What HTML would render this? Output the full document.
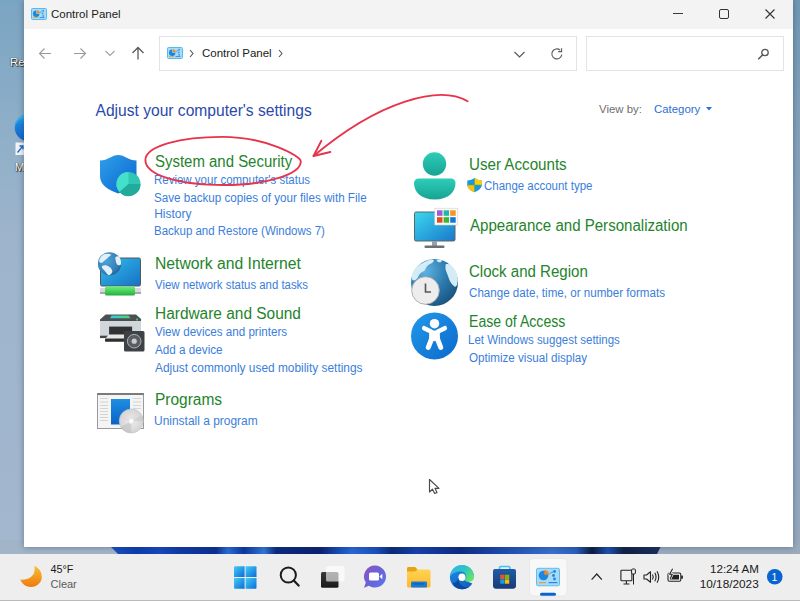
<!DOCTYPE html>
<html><head><meta charset="utf-8">
<style>
*{margin:0;padding:0;box-sizing:border-box}
html,body{width:800px;height:601px;overflow:hidden}
body{position:relative;font-family:"Liberation Sans",sans-serif;background:linear-gradient(180deg,rgba(30,40,60,0) 0%,rgba(30,40,60,0) 100%),linear-gradient(90deg,rgba(0,0,0,0) 0%,rgba(0,0,0,0) 60%,rgba(30,45,70,.1) 100%),linear-gradient(180deg,#7aa5c2 0%,#8fafc8 22%,#9db4cc 40%,#a4b8cf 100%)}
.a{position:absolute;white-space:nowrap;line-height:1}
#win{position:absolute;left:24px;top:0;width:769px;height:547px;background:#fff;box-shadow:0 0 6px rgba(40,50,70,.45)}
#title{position:absolute;left:0;top:0;width:769px;height:29px;background:#f3f3f3}
.box{position:absolute;border:1px solid #e3e3e3;background:#fff}
.t{color:#23842b;font-size:16px;transform-origin:0 0}
.l{color:#3a7edb;font-size:12px;transform-origin:0 0}
#tb{position:absolute;left:0;top:554px;width:800px;height:47px;background:#eeeeee;border-bottom:1px solid #bababa}
</style></head><body>
<!-- desktop bits -->
<svg class="a" style="left:0;top:540px" width="800" height="14" viewBox="0 540 800 14">
  <defs><linearGradient id="gStrip" x1="0" y1="0" x2="800" y2="0" gradientUnits="userSpaceOnUse">
    <stop offset="0.13" stop-color="#1a50c0"/>
    <stop offset="0.14" stop-color="#1a50c0"/><stop offset="0.17" stop-color="#0c3cb0"/>
    <stop offset="0.2" stop-color="#1648c0"/><stop offset="0.225" stop-color="#0e3aa8"/>
    <stop offset="0.27" stop-color="#0a2e94"/><stop offset="0.285" stop-color="#2a6ed8"/>
    <stop offset="0.305" stop-color="#0a36a0"/><stop offset="0.33" stop-color="#3478dc"/>
    <stop offset="0.345" stop-color="#0a2a80"/><stop offset="0.4" stop-color="#0a2070"/>
    <stop offset="0.425" stop-color="#1850c0"/><stop offset="0.44" stop-color="#2a68d8"/>
    <stop offset="0.47" stop-color="#1a50c0"/><stop offset="0.49" stop-color="#0a2a78"/>
    <stop offset="0.52" stop-color="#1440b0"/><stop offset="0.575" stop-color="#0c2c84"/>
    <stop offset="0.625" stop-color="#1a4ab0"/><stop offset="0.69" stop-color="#3a70d0"/>
    <stop offset="0.72" stop-color="#2a60c0"/><stop offset="0.74" stop-color="#0a1a40"/>
    <stop offset="0.76" stop-color="#2050b0"/><stop offset="0.78" stop-color="#102040"/>
    <stop offset="0.83" stop-color="#1a3060"/>
  </linearGradient></defs>
  <rect x="0" y="540" width="800" height="14" fill="#9aaabd"/><rect x="0" y="540" width="120" height="14" fill="#a2b4c8"/><path d="M104,540 L664,540 L660.5,547 L657,554 L118,554 L111,547 Z" fill="url(#gStrip)"/>
</svg>

<!-- desktop icons -->
<div class="a" style="left:10px;top:56.2px;font-size:11.6px;color:#fff;text-shadow:0 0 1px #000,1px 1px 1px #222">Re</div>
<svg class="a" style="left:0;top:100px" width="30" height="60" viewBox="0 100 30 60">
  <defs><linearGradient id="gDesk" x1="0" y1="0" x2="0" y2="1"><stop offset="0" stop-color="#36a8ec"/><stop offset="0.4" stop-color="#1a82dc"/><stop offset="1" stop-color="#1064c8"/></linearGradient></defs>
  <circle cx="28" cy="127.5" r="13.3" fill="url(#gDesk)"/>
  <path d="M15,128 C16,121 21,117.5 27,117.5 L27,114.5 C20,114.5 15,120 15,128Z" fill="#3ab4f0" opacity="0.8"/>
  <rect x="15.5" y="142.5" width="10" height="12.5" fill="#f4f4f4"/>
  <path d="M17.5,152.5 L22.5,146.5 M19.5,146 H23 V149.5" stroke="#1a6ad8" stroke-width="1.3" fill="none"/>
</svg>
<div class="a" style="left:14.7px;top:161px;font-size:11.6px;color:#fff;text-shadow:0 0 1px #000,1px 1px 1px #222">M</div>
<div id="win">
  <div id="title">
    <svg class="a" style="left:7px;top:8px" width="16" height="12" viewBox="0 0 16 12">
      <rect x="0.5" y="0.5" width="15" height="11" rx="1" fill="#a6dcf8" stroke="#5ab8f0"/>
      <path d="M5.2 5.8 L5.2 2.6 A3.2 3.2 0 1 0 8.4 5.8 Z" fill="#1a86dc"/>
      <path d="M5.7 5.3 L5.7 2.3 A3 3 0 0 1 8.7 5.3 Z" fill="#f08a24"/>
      <path d="M8.8 4.8 Q10 3.5 11.5 3.2" stroke="#3a90e0" stroke-width="0.7" fill="none"/>
      <circle cx="12.2" cy="2.8" r="1" fill="#4a9ae4"/><circle cx="11.6" cy="5.6" r="1" fill="#4a9ae4"/><circle cx="12.2" cy="8" r="0.9" fill="#4a9ae4"/>
      <rect x="2" y="9" width="5" height="0.9" fill="#f0a030"/><rect x="8.5" y="9" width="5" height="0.9" fill="#3a8ae0"/>
    </svg>
    <div class="a" style="left:27px;top:9px;font-size:11.5px;color:#1a1a1a">Control Panel</div>
    <div class="a" style="left:649px;top:13px;width:10px;height:1px;background:#3a3a3a"></div>
    <div class="a" style="left:695px;top:9px;width:10px;height:10px;border:1px solid #333;border-radius:2px"></div>
    <svg class="a" style="left:741px;top:9px" width="10" height="10" viewBox="0 0 10 10"><path d="M0.5 0.5 L9.5 9.5 M9.5 0.5 L0.5 9.5" stroke="#333" stroke-width="1.1"/></svg>
  </div>
  <!-- nav -->
  <svg class="a" style="left:14px;top:47px" width="14" height="13" viewBox="0 0 14 13"><path d="M13 6.5 H1.5 M6.5 1.5 L1.5 6.5 L6.5 11.5" stroke="#9a9a9a" stroke-width="1.1" fill="none"/></svg>
  <svg class="a" style="left:49px;top:47px" width="14" height="13" viewBox="0 0 14 13"><path d="M1 6.5 H12.5 M7.5 1.5 L12.5 6.5 L7.5 11.5" stroke="#9a9a9a" stroke-width="1.1" fill="none"/></svg>
  <svg class="a" style="left:81px;top:50px" width="10" height="7" viewBox="0 0 10 7"><path d="M0.5 1 L5 5.5 L9.5 1" stroke="#a0a0a0" stroke-width="1.1" fill="none"/></svg>
  <svg class="a" style="left:107px;top:46px" width="14" height="14" viewBox="0 0 14 14"><path d="M7 13.5 V1.5 M1.5 7 L7 1.5 L12.5 7" stroke="#5a5a5a" stroke-width="1.3" fill="none"/></svg>
  <!-- address -->
  <div class="box" style="left:135px;top:36px;width:418px;height:35px"></div>
  <svg class="a" style="left:143px;top:47px" width="16" height="12" viewBox="0 0 16 12">
      <rect x="0.5" y="0.5" width="15" height="11" rx="1" fill="#a6dcf8" stroke="#5ab8f0"/>
      <path d="M5.2 5.8 L5.2 2.6 A3.2 3.2 0 1 0 8.4 5.8 Z" fill="#1a86dc"/>
      <path d="M5.7 5.3 L5.7 2.3 A3 3 0 0 1 8.7 5.3 Z" fill="#f08a24"/>
      <path d="M8.8 4.8 Q10 3.5 11.5 3.2" stroke="#3a90e0" stroke-width="0.7" fill="none"/>
      <circle cx="12.2" cy="2.8" r="1" fill="#4a9ae4"/><circle cx="11.6" cy="5.6" r="1" fill="#4a9ae4"/><circle cx="12.2" cy="8" r="0.9" fill="#4a9ae4"/>
      <rect x="2" y="9" width="5" height="0.9" fill="#f0a030"/><rect x="8.5" y="9" width="5" height="0.9" fill="#3a8ae0"/>
  </svg>
  <svg class="a" style="left:165px;top:49px" width="5" height="9" viewBox="0 0 5 9"><path d="M1 1 L4 4.5 L1 8" stroke="#555" stroke-width="1.1" fill="none"/></svg>
  <div class="a" style="left:178px;top:48px;font-size:11.5px;color:#1a1a1a">Control Panel</div>
  <svg class="a" style="left:254px;top:49px" width="5" height="9" viewBox="0 0 5 9"><path d="M1 1 L4 4.5 L1 8" stroke="#555" stroke-width="1.1" fill="none"/></svg>
  <svg class="a" style="left:490px;top:51px" width="11" height="7" viewBox="0 0 11 7"><path d="M0.5 1 L5.5 6 L10.5 1" stroke="#555" stroke-width="1.1" fill="none"/></svg>
  <svg class="a" style="left:526px;top:47px" width="14" height="14" viewBox="0 0 14 14"><path d="M11.8 7.5 A5 5 0 1 1 10.2 3.2" stroke="#5a5a5a" stroke-width="1.1" fill="none"/><path d="M11.6 1.2 V4.6 H8.2" stroke="#5a5a5a" stroke-width="1.1" fill="none"/></svg>
  <!-- search -->
  <div class="box" style="left:562px;top:36px;width:198px;height:35px"></div>
  <svg class="a" style="left:733px;top:48px" width="12" height="12" viewBox="0 0 12 12"><circle cx="8" cy="4.5" r="3.2" stroke="#555" stroke-width="1.3" fill="none"/><path d="M5.7 6.8 L1.2 11.2" stroke="#555" stroke-width="1.5"/></svg>
  <!-- content -->
  <div class="a" style="left:71.5px;top:103px;font-size:15.6px;color:#2a4aab">Adjust your computer's settings</div>
  <div class="a" style="left:575px;top:104.2px;font-size:11.4px;color:#6e6e6e">View by:</div>
  <div class="a" style="left:630px;top:104.2px;font-size:11.4px;color:#2a6fd6">Category</div>
  <svg class="a" style="left:681.5px;top:107px" width="6" height="4" viewBox="0 0 6 4"><path d="M0 0 H6 L3 3.5Z" fill="#2a6fd6"/></svg>
  <div class="a t" style="left:131.17px;top:153.96px;transform:scaleX(0.9349)">System and Security</div>
  <div class="a l" style="left:130.24px;top:173.64px;transform:scaleX(0.9574)">Review your computer's status</div>
  <div class="a l" style="left:130.23px;top:191.54px;transform:scaleX(0.9688)">Save backup copies of your files with File</div>
  <div class="a l" style="left:130.20px;top:207.54px;transform:scaleX(1.0000)">History</div>
  <div class="a l" style="left:130.24px;top:224.84px;transform:scaleX(0.9559)">Backup and Restore (Windows 7)</div>
  <div class="a t" style="left:130.72px;top:255.96px;transform:scaleX(0.9824)">Network and Internet</div>
  <div class="a l" style="left:131.20px;top:278.64px;transform:scaleX(0.9491)">View network status and tasks</div>
  <div class="a t" style="left:130.73px;top:306.46px;transform:scaleX(0.9651)">Hardware and Sound</div>
  <div class="a l" style="left:131.20px;top:326.04px;transform:scaleX(0.9676)">View devices and printers</div>
  <div class="a l" style="left:131.20px;top:344.44px;transform:scaleX(0.9739)">Add a device</div>
  <div class="a l" style="left:131.20px;top:361.84px;transform:scaleX(0.9909)">Adjust commonly used mobility settings</div>
  <div class="a t" style="left:130.73px;top:392.06px;transform:scaleX(0.9676)">Programs</div>
  <div class="a l" style="left:130.20px;top:414.84px;transform:scaleX(0.9961)">Uninstall a program</div>
  <div class="a t" style="left:444.55px;top:157.46px;transform:scaleX(0.9471)">User Accounts</div>
  <div class="a l" style="left:460.00px;top:179.84px;transform:scaleX(0.9558)">Change account type</div>
  <div class="a t" style="left:445.50px;top:218.46px;transform:scaleX(0.9411)">Appearance and Personalization</div>
  <div class="a t" style="left:444.56px;top:264.06px;transform:scaleX(0.9408)">Clock and Region</div>
  <div class="a l" style="left:444.50px;top:287.24px;transform:scaleX(0.9665)">Change date, time, or number formats</div>
  <div class="a t" style="left:444.62px;top:314.26px;transform:scaleX(0.8806)">Ease of Access</div>
  <div class="a l" style="left:444.04px;top:334.04px;transform:scaleX(0.9563)">Let Windows suggest settings</div>
  <div class="a l" style="left:444.50px;top:352.44px;transform:scaleX(0.9680)">Optimize visual display</div>
</div>

<!-- content icons -->
<svg class="a" style="left:0;top:0" width="800" height="547" viewBox="0 0 800 547">
  <defs>
    <linearGradient id="gShield" x1="0" y1="0" x2="1" y2="1"><stop offset="0" stop-color="#2e9fea"/><stop offset="1" stop-color="#0a66d0"/></linearGradient>
    <linearGradient id="gMon" x1="0" y1="0" x2="1" y2="1"><stop offset="0" stop-color="#33c0ea"/><stop offset="1" stop-color="#1670c6"/></linearGradient>
    <linearGradient id="gMon2" x1="0" y1="0" x2="1" y2="1"><stop offset="0" stop-color="#3ad8ee"/><stop offset="1" stop-color="#1a78cc"/></linearGradient>
    <linearGradient id="gGreen" x1="0" y1="0" x2="0" y2="1"><stop offset="0" stop-color="#6ef07a"/><stop offset="1" stop-color="#22b040"/></linearGradient>
    <radialGradient id="gGlobe" cx="0.35" cy="0.35" r="0.75"><stop offset="0" stop-color="#4ea4d8"/><stop offset="0.7" stop-color="#3580b8"/><stop offset="1" stop-color="#24608e"/></radialGradient>
    <radialGradient id="gGlobe2" cx="0.3" cy="0.25" r="0.9"><stop offset="0" stop-color="#62b2e2"/><stop offset="0.5" stop-color="#2c7cb0"/><stop offset="1" stop-color="#174c74"/></radialGradient>
    <linearGradient id="gTeal" x1="0" y1="0" x2="0" y2="1"><stop offset="0" stop-color="#2ecdb8"/><stop offset="1" stop-color="#17a394"/></linearGradient>
    <linearGradient id="gEase" x1="0" y1="0" x2="1" y2="1"><stop offset="0" stop-color="#229aea"/><stop offset="1" stop-color="#0b68cc"/></linearGradient>
    <radialGradient id="gCD" cx="0.5" cy="0.5" r="0.5"><stop offset="0" stop-color="#f6f6f6"/><stop offset="0.3" stop-color="#e6e6e6"/><stop offset="1" stop-color="#d4d4d4"/></radialGradient>
    <linearGradient id="gBlueDoc" x1="0" y1="0" x2="0" y2="1"><stop offset="0" stop-color="#1e8ee0"/><stop offset="1" stop-color="#0a62c8"/></linearGradient>
  </defs>
  <!-- System and Security shield -->
  <path d="M100,160.5 C108,160.5 112,155 118.2,155 C124.5,155 128.5,160.5 136.5,160.5 L136.5,176 C136.5,185 128,190 118.2,193.5 C108,190 100,185 100,176 Z" fill="url(#gShield)"/>
  <circle cx="128.5" cy="184" r="12" fill="#2fc6b2"/>
  <path d="M128.5,184 L128.5,172 A12,12 0 0 0 119.5,192 Z" fill="#44e0cc"/>
  <path d="M128.5,184 L119.5,192 A12,12 0 0 0 140.5,184 Z" fill="#22ab9a"/>
  <!-- Network -->
  <rect x="100.5" y="258" width="40" height="28" rx="1.5" fill="url(#gMon)" stroke="#505860" stroke-width="1"/>
  <rect x="100" y="288" width="41" height="6" rx="1" fill="#d8d8d8"/>
  <rect x="100" y="292" width="41" height="2" fill="#a8a8a8"/>
  <rect x="105" y="286.5" width="30" height="9" rx="1.5" fill="url(#gGreen)"/>
  <circle cx="109.5" cy="263.8" r="11.65" fill="url(#gGlobe)"/>
  <path d="M99,261.5 C99.5,258 101.5,255.5 104,254.3 C106.5,253.5 109.5,253.6 111.5,254.8 C110,256 109,256.5 107.5,258 C106,259.5 105,260 103.5,261.5 C102.5,263 100.5,263.5 99,261.5Z M101.8,266.2 C104,264.8 107,265 109.5,267 C111,268 112.2,269.5 112.3,271.5 C112,273.5 110.5,274.8 108.5,275.2 C106.5,273.5 105.5,271.5 104,270 C102.8,269 101.8,267.8 101.8,266.2Z M115.2,257.5 C116.5,256.2 118,255.8 119.2,256.8 C120.5,258.5 121.2,261 121,264 C120.5,265.5 118.5,265.8 117,264.5 C116,262.5 115.5,260 115.2,257.5Z" fill="#e2f1f9"/>
  <!-- Printer / Hardware -->
  <defs><linearGradient id="gSlot" x1="0" y1="0" x2="1" y2="0"><stop offset="0" stop-color="#30cce4"/><stop offset="1" stop-color="#52d46a"/></linearGradient></defs>
  <path d="M105.6,314.4 L136,314.4 L141,319 L141,321.2 L100,321.2 L100,319.5 Z" fill="#4c5054"/>
  <path d="M111.6,315.5 L128.5,315.5 L130.5,318.2 L110,318.2 Z" fill="url(#gSlot)"/>
  <rect x="136" y="318.5" width="2" height="2" fill="#3cc850"/>
  <rect x="100" y="321.2" width="41" height="14.8" fill="#d2d6da"/>
  <rect x="100" y="335.7" width="41" height="2.4" fill="#44484c"/>
  <rect x="109.1" y="326.6" width="23" height="8" fill="#303234"/>
  <path d="M108.5,334.8 L126,334.8 L126,338 L106,338 Z" fill="#e6e6e6"/>
  <rect x="105" y="338.4" width="21" height="3.4" rx="0.8" fill="#2c2e30"/>
  <rect x="124" y="331" width="20.5" height="20.5" rx="1.5" fill="#3e4246"/>
  <circle cx="134.2" cy="341.2" r="6.8" fill="#5a5e62" stroke="#b8bcc0" stroke-width="0.9"/>
  <circle cx="134.2" cy="341.2" r="2.6" fill="#c8ccd0"/>
  <!-- Programs -->
  <rect x="97.5" y="393.5" width="46" height="35" fill="#f4f4f4" stroke="#9a9a9a" stroke-width="1"/>
  <rect x="97" y="393" width="47" height="2" rx="1" fill="#7a7a7a"/>
  <g fill="#d4d4d4"><rect x="100" y="398" width="8" height="1"/><rect x="100" y="401.5" width="8" height="1"/><rect x="100" y="405" width="8" height="1"/><rect x="100" y="408" width="8" height="1"/><rect x="100" y="411" width="8" height="1"/><rect x="100" y="414" width="8" height="1"/><rect x="100" y="417" width="8" height="1"/><rect x="100" y="420" width="8" height="1"/>
  <rect x="133" y="398" width="8" height="1"/><rect x="133" y="401.5" width="8" height="1"/><rect x="133" y="405" width="8" height="1"/><rect x="133" y="408" width="8" height="1"/></g>
  <rect x="111" y="399" width="19" height="25.5" fill="url(#gBlueDoc)"/>
  <circle cx="131.2" cy="421" r="12" fill="url(#gCD)" stroke="#c0c0c0" stroke-width="0.6"/>
  <path d="M131.2,421 L131.2,433 A12,12 0 0 1 120.8,427 Z" fill="#bdbdbd" opacity="0.55"/><path d="M131.2,421 L141.6,415 A12,12 0 0 1 143.2,421 Z" fill="#c4c4c4" opacity="0.5"/><path d="M131.2,421 L122,417 M131.2,421 L138,413" stroke="#e8c8f0" stroke-width="0.8"/>
  <circle cx="131.2" cy="421" r="3" fill="#fafafa" stroke="#d0d0d0" stroke-width="0.6"/>
  <!-- User accounts -->
  <circle cx="434.5" cy="164" r="11.7" fill="url(#gTeal)"/>
  <path d="M418.8,178.5 L451,178.5 C453.6,178.5 455.5,180.3 455.5,183 C455.5,191.5 449,199.5 434.7,199.5 C420.5,199.5 414,191.5 414,183 C414,180.3 416,178.5 418.8,178.5 Z" fill="url(#gTeal)"/>
  <!-- UAC shield -->
  <path d="M467.3,180.5 C470,180.5 472.5,179.5 474.5,178 C476.5,179.5 479,180.5 481.8,180.5 L481.8,184.5 C481.8,188 479,190.5 474.5,192.2 C470,190.5 467.3,188 467.3,184.5 Z" fill="#1a96e8"/>
  <path d="M474.5,178 C476.5,179.5 479,180.5 481.8,180.5 L481.8,185 L474.5,185 Z" fill="#ffd000"/>
  <path d="M467.3,185 L474.5,185 L474.5,192.2 C470,190.5 467.3,188 467.3,185 Z" fill="#ffc400"/>
  <path d="M474.5,178 V192 M467.3,185 H481.8" stroke="#5aa858" stroke-width="0.6"/>
  <!-- Appearance -->
  <rect x="414.5" y="212" width="40.5" height="29" rx="1.5" fill="url(#gMon2)" stroke="#5a6670" stroke-width="1"/>
  <rect x="432" y="241" width="5" height="5" fill="#9aa0a6"/>
  <rect x="424.5" y="245.5" width="20" height="2.5" rx="1" fill="#6a7076"/>
  <rect x="434.8" y="208.2" width="23" height="16.8" fill="#fafafa" stroke="#d8d0c8" stroke-width="0.6"/>
  <rect x="437" y="210.3" width="5.5" height="5.5" fill="#9a5ed8"/>
  <rect x="443.6" y="210.3" width="5.5" height="5.5" fill="#20b8a8"/>
  <rect x="450.2" y="210.3" width="5.5" height="5.5" fill="#f5961e"/>
  <rect x="437" y="217.2" width="5.5" height="5.5" fill="#e84a1a"/>
  <rect x="443.6" y="217.2" width="5.5" height="5.5" fill="#3cb82a"/>
  <rect x="450.2" y="217.2" width="5.5" height="5.5" fill="#0e78e0"/>
  <!-- Clock and Region -->
  <circle cx="434.5" cy="282.5" r="23.5" fill="url(#gGlobe2)"/>
  <path d="M411.5,277 C412.5,271 416,267 420,264.5 C423,262.5 426,261 429,260 C432,259.2 434.5,259.6 433.5,261.8 C432,263.5 429.5,264 427.5,265.8 C425.5,267.5 426,270 423.5,271.2 C421,272.5 419.5,273.5 418.5,276 C417.5,279 415,281.5 412.5,280 Z M436.5,260 C439.5,258.8 442.5,259.5 441.5,261.5 C439.5,263 437.5,262.5 436.5,260 Z M445.5,264.5 C449,263 452,265 453.5,268 C455.5,270.5 457.5,274.5 457.8,279 C457.8,284 456.5,287.5 454.5,286.5 C451.5,284.5 449.5,281 448.5,277.5 C447.5,273.5 445,270.5 445.5,267 Z" fill="#d4ecf6"/>
  <circle cx="425.5" cy="290.5" r="13.8" fill="#ededed" stroke="#a8a8a8" stroke-width="0.9"/>
  <path d="M425.5,283.5 V292 H431" stroke="#555" stroke-width="1.6" fill="none"/>
  <!-- Ease of Access -->
  <circle cx="434.5" cy="336" r="23.5" fill="url(#gEase)"/>
  <circle cx="434.5" cy="323.7" r="4.75" fill="#fff"/>
  <path d="M424.2,328.2 L431,331.5 M444.8,328.2 L438,331.5" stroke="#fff" stroke-width="4.6" stroke-linecap="round" fill="none"/>
  <path d="M431.5,339 L428.3,347.3 M437.5,339 L440.7,347.3" stroke="#fff" stroke-width="5" stroke-linecap="round" fill="none"/>
  <path d="M429.3,330.6 L439.7,330.6 L440,339.5 L434.5,341.2 L429,339.5 Z" fill="#fff"/>
</svg>
<svg class="a" style="left:425px;top:476px" width="20" height="22" viewBox="425 476 20 22">
  <path d="M429.5,479.5 L429.5,492 L432.5,489.2 L434.7,493.6 L437,492.5 L435,488.3 L439,488.3 Z" fill="#fff" stroke="#4a4a4a" stroke-width="1.15" stroke-linejoin="round"/>
</svg>
<!-- annotations -->
<svg class="a" style="left:0;top:0" width="800" height="547" viewBox="0 0 800 547">
  <path d="M145.4,160 C145.4,146 181,136.8 222,136.8 C266,136.8 300.8,156 300.8,161.5 C300.8,174 268,185 224,185 C178,185 145.4,175 145.4,160 Z" fill="none" stroke="#e8334a" stroke-width="1.85"/>
  <path d="M467.6,101.2 C440,85 380,100 313.5,156" fill="none" stroke="#e8334a" stroke-width="1.85" stroke-linecap="round"/>
  <path d="M321.4,140.8 L313.5,156 L330.4,152" fill="none" stroke="#e8334a" stroke-width="1.85" stroke-linecap="round" stroke-linejoin="round"/>
</svg>
<div id="tb"></div>
<svg class="a" style="left:0;top:554px" width="800" height="47" viewBox="0 554 800 47">
  <defs>
    <linearGradient id="gMoon" x1="0" y1="0" x2="0" y2="1"><stop offset="0" stop-color="#f8c030"/><stop offset="1" stop-color="#ee7a10"/></linearGradient>
    <linearGradient id="gWin" x1="0" y1="0" x2="1" y2="1"><stop offset="0" stop-color="#44ccf8"/><stop offset="1" stop-color="#0a6cd6"/></linearGradient>
    <linearGradient id="gTV" x1="0" y1="0" x2="0" y2="1"><stop offset="0" stop-color="#3a3a3a"/><stop offset="1" stop-color="#181818"/></linearGradient>
    <linearGradient id="gChat" x1="0" y1="0" x2="1" y2="1"><stop offset="0" stop-color="#8c54c0"/><stop offset="0.5" stop-color="#6a62d8"/><stop offset="1" stop-color="#5a7ae8"/></linearGradient>
    <linearGradient id="gFold" x1="0" y1="0" x2="0" y2="1"><stop offset="0" stop-color="#ffd85a"/><stop offset="1" stop-color="#ffb82a"/></linearGradient>
    <linearGradient id="gEdge1" x1="0" y1="0.2" x2="1" y2="0.8"><stop offset="0" stop-color="#34b4f0"/><stop offset="0.45" stop-color="#2ac4c4"/><stop offset="1" stop-color="#6ee660"/></linearGradient>
    <linearGradient id="gEdge2" x1="0" y1="0" x2="0.5" y2="1"><stop offset="0" stop-color="#1e90e8"/><stop offset="1" stop-color="#1262c0"/></linearGradient>
    <linearGradient id="gStore" x1="0" y1="0" x2="0" y2="1"><stop offset="0" stop-color="#1e5aa8"/><stop offset="1" stop-color="#1a3a78"/></linearGradient>
  </defs>
  <!-- weather -->
  <path d="M34.3,566 C39,567.8 41.8,572 41.8,577 C41.8,582.5 37,587 31,587 C26,587 22,584 20.2,579.5 C27,580.5 32.8,577 34.2,572.5 C34.8,570.3 34.8,568 34.3,566 Z" fill="url(#gMoon)"/>
  <!-- start -->
  <g fill="url(#gWin)">
    <path d="M235,566.2 H244.6 V577 H234 V567.2 Q234,566.2 235,566.2Z"/>
    <path d="M245.6,566.2 H255.5 Q256.5,566.2 256.5,567.2 V577 H245.6Z"/>
    <path d="M234,578 H244.6 V588.8 H235 Q234,588.8 234,587.8Z"/>
    <path d="M245.6,578 H256.5 V587.8 Q256.5,588.8 255.5,588.8 H245.6Z"/>
  </g>
  <!-- search -->
  <circle cx="288.3" cy="575" r="7.6" fill="none" stroke="#1c1c1c" stroke-width="2"/>
  <path d="M293.8,580.6 L298.6,585.6" stroke="#1c1c1c" stroke-width="2.2" stroke-linecap="round"/>
  <!-- task view -->
  <rect x="321" y="572" width="17.5" height="15.8" rx="1.5" fill="url(#gTV)"/>
  <rect x="326" y="566" width="18.5" height="15.5" rx="1.5" fill="#ffffff" fill-opacity="0.62"/>
  <!-- chat -->
  <path d="M375,565.5 A11,11 0 1 1 369,585.7 L364,587.8 L365.8,582.5 A11,11 0 0 1 375,565.5Z" fill="url(#gChat)"/>
  <rect x="369" y="572.5" width="10" height="8" rx="1.5" fill="#fff"/>
  <path d="M379.5,576.5 L382.3,573.8 V579.2Z" fill="#fff"/>
  <!-- folder -->
  <path d="M407,568.5 Q407,567 408.5,567 H415 L417.5,569.5 H429 Q430.5,569.5 430.5,571 V586 Q430.5,587.5 429,587.5 H408.5 Q407,587.5 407,586Z" fill="url(#gFold)"/>
  <path d="M407,568.5 Q407,567 408.5,567 H415 L417.5,569.5 L415,571.5 H407Z" fill="#e8a410"/>
  <rect x="411" y="581.5" width="16" height="6" rx="1.2" fill="#1a7ad8"/>
  <rect x="413.5" y="583.3" width="11" height="1.2" fill="#0f5cb0"/>
  <!-- edge -->
  <path d="M474.1,577 A12.1,12.1 0 1 0 472.3,583.6 L468,581.8 Z" fill="url(#gEdge2)"/>
  <ellipse cx="462" cy="577.3" rx="3.6" ry="3.8" fill="#fff"/>
  <path d="M458.3,577.5 C458.3,584 462.5,587.6 467.5,587.3 C469.8,587.1 471.3,585.8 472.2,583.8 C470.2,587.5 466.5,589.2 462.3,589.2 C457.5,589.2 454,586.5 452.6,583 C455.5,583.3 457.6,581.5 458.3,577.5Z" fill="#0c4a9e"/>
  <path d="M450.1,576.5 C450.6,569.8 455.6,565 462,565 C469,565 474.1,570.2 474.1,577 C474.1,580.2 471.8,581.8 468.8,581.8 C466.5,581.8 464.8,581 464.6,579.9 C466,579.2 466.3,578.1 466.3,577 C466.3,573.8 463.8,571.6 460.8,571.6 C455.8,571.6 452,573.4 450.1,576.5Z" fill="url(#gEdge1)"/>
  <!-- store -->
  <path d="M499.5,570 V567.8 Q499.5,566.5 500.8,566.5 H508.6 Q509.9,566.5 509.9,567.8 V570" fill="none" stroke="#3cc4f4" stroke-width="1.6"/>
  <path d="M495,569 H514 Q516,569 516,571 V585.5 Q516,588.7 512.8,588.7 H496.2 Q493,588.7 493,585.5 V571 Q493,569 495,569Z" fill="url(#gStore)"/>
  <rect x="500.2" y="574.7" width="4.3" height="4.3" fill="#f25022"/>
  <rect x="504.9" y="574.7" width="4.3" height="4.3" fill="#7fba00"/>
  <rect x="500.2" y="579.4" width="4.3" height="4.3" fill="#00a4ef"/>
  <rect x="504.9" y="579.4" width="4.3" height="4.3" fill="#ffb900"/>
  <!-- active CP -->
  <rect x="529.5" y="558.5" width="37.5" height="37.5" rx="4" fill="#f8f8f8" stroke="#e4e4e4" stroke-width="0.8"/>
  <rect x="536.5" y="568.3" width="23" height="17.5" rx="1.5" fill="#a6daf6" stroke="#62bcf0" stroke-width="1"/>
  <circle cx="543.5" cy="575.5" r="4.8" fill="#1a88e0"/>
  <path d="M544.3,574.7 V569.9 A4.8,4.8 0 0 1 549.1,574.7Z" fill="#f08a24"/>
  <path d="M549.5,574 Q551,572 553,572" stroke="#1a88e0" stroke-width="0.8" fill="none"/>
  <circle cx="554.5" cy="571.5" r="1.4" fill="#1a88e0"/><circle cx="553.5" cy="575.5" r="1.4" fill="#1a88e0"/><circle cx="554.5" cy="579" r="1.4" fill="#1a88e0"/>
  <rect x="539" y="582" width="7" height="1.2" fill="#f09a30"/><rect x="548.5" y="582" width="9" height="1.2" fill="#2a88e0"/>
  <rect x="540" y="592.7" width="16" height="3" rx="1.5" fill="#0a64d0"/>
  <!-- tray -->
  <path d="M591.6,579.7 L596.8,574 L601.8,579.7" stroke="#222" stroke-width="1.2" fill="none"/>
  <rect x="620.9" y="570.3" width="11" height="10.5" rx="0.8" fill="none" stroke="#222" stroke-width="1.1"/>
  <path d="M626.4,581 V583.8 M623.5,584 H629.5" stroke="#222" stroke-width="1.1"/>
  <rect x="631.6" y="569" width="3.8" height="5" rx="1" fill="#eee" stroke="#222" stroke-width="1"/>
  <path d="M633.5,574 V584.5" stroke="#222" stroke-width="1"/>
  <path d="M644,575 H646.5 L650.5,571.8 V582.2 L646.5,579 H644Z" fill="none" stroke="#222" stroke-width="1.1" stroke-linejoin="round"/>
  <path d="M652.5,574.5 Q654,577 652.5,579.5 M654.8,572.8 Q657.3,577 654.8,581.2 M657,571.2 Q660.5,577 657,582.8" fill="none" stroke="#222" stroke-width="1.1"/>
  <rect x="668" y="573" width="12.8" height="8.3" rx="1.5" fill="none" stroke="#222" stroke-width="1.1"/>
  <rect x="670" y="574.8" width="9" height="4.7" fill="#222"/>
  <rect x="681.2" y="575.4" width="1.7" height="3.4" rx="0.5" fill="#222"/>
  <path d="M672.6,568.8 L669.6,574.3 L672.3,574.3 L670.2,578.8" stroke="#eeeeee" stroke-width="2.6" fill="none" stroke-linejoin="round"/>
  <path d="M672.6,568.8 L669.6,574.3 L672.3,574.3 L670.2,578.8" stroke="#222" stroke-width="1.05" fill="none" stroke-linejoin="round"/>
  <circle cx="774.75" cy="576.75" r="7.8" fill="#0a64d0"/>
</svg>
<div class="a" style="left:50.5px;top:563.8px;font-size:10.8px;color:#1a1a1a">45°F</div>
<div class="a" style="left:50.5px;top:579.4px;font-size:11px;color:#5a5a5a">Clear</div>
<div class="a" style="left:710px;top:563.3px;font-size:11.6px;color:#1a1a1a">12:24 AM</div>
<div class="a" style="left:699.7px;top:578.6px;font-size:11.8px;color:#1a1a1a">10/18/2023</div>
<div class="a" style="left:771.6px;top:572.2px;font-size:10.5px;color:#fff">1</div>

</body></html>
